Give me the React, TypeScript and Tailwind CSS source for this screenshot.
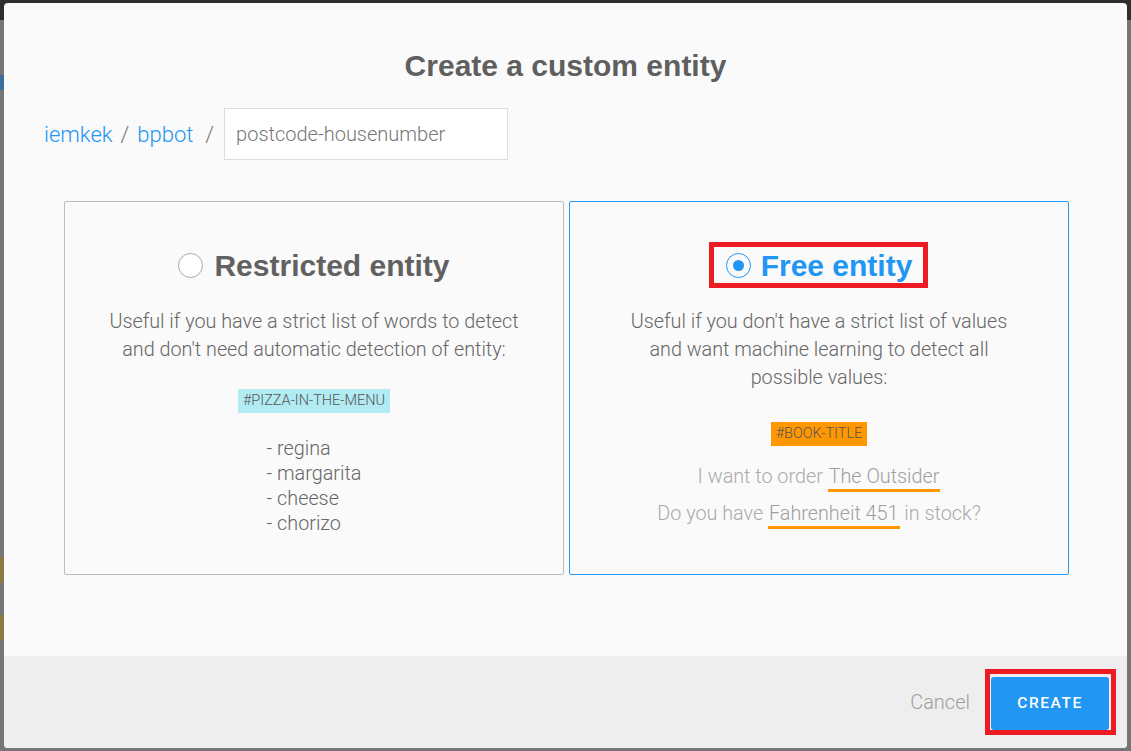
import React from "react"

const body = { fontFamily: "Roboto, 'Noto Sans', sans-serif" }
const head = { fontFamily: "'Liberation Sans', Arial, sans-serif" }

function Radio({ checked }: { checked?: boolean }) {
  return checked ? (
    <span className="w-[25px] h-[25px] rounded-full border-[1.5px] border-[#2196f3] flex items-center justify-center shrink-0">
      <span className="w-[11px] h-[11px] rounded-full bg-[#2196f3]" />
    </span>
  ) : (
    <span className="w-[25px] h-[25px] rounded-full border-[1.5px] border-[#aaaaaa] bg-white shrink-0" />
  )
}

function Mark({ children }: { children: React.ReactNode }) {
  return <span className="border-b-[3px] border-[#ff9800] pb-[1px] px-[1px] text-[#9e9e9e]">{children}</span>
}

export default function App() {
  return (
    <div className="relative w-full h-[751px] bg-[#767676] overflow-hidden" style={body}>
      {/* page behind the overlay */}
      <div className="absolute top-0 left-0 right-0 h-[20px] bg-[#2e2e2e]" />
      <div className="absolute left-0 top-[75px] w-[4px] h-[15px] bg-[#3d6f9a]" />
      <div className="absolute left-0 top-[557px] w-[4px] h-[26px] bg-[#8c7a45]" />
      <div className="absolute left-0 top-[615px] w-[4px] h-[25px] bg-[#8c7a45]" />

      <div className="relative ml-[4px] mt-[3px] w-[1123px] h-[745px] bg-[#fafafa] rounded-[4px] flex flex-col overflow-hidden">
        <h2 className="pt-[47px] text-center text-[30px] leading-[32px] font-bold text-[#5f5f5f]" style={head}>
          Create a custom entity
        </h2>

        <div className="mt-[26px] h-[52px] px-[40px] flex items-center text-[22px] font-light text-[#777]">
          <span className="text-[#2196f3]">iemkek</span>
          <span className="mx-[8px]">/</span>
          <span className="text-[#2196f3]">bpbot</span>
          <span className="ml-[12px] mr-[10px]">/</span>
          <input
            className="w-[284px] h-[52px] bg-white border border-[#dddddd] px-[11px] text-[20px] font-light text-[#777] outline-none placeholder:text-[#777]"
            placeholder="postcode-housenumber"
            style={body}
          />
        </div>

        <div className="mt-[41px] pl-[60px] pr-[58px] grid grid-cols-2 gap-[5px]">
          <div className="h-[374px] border border-[#bdbdbd] rounded-[2px] flex flex-col items-center pt-[43px]">
            <div className="h-[40px] flex items-center gap-[11px] text-[30px] font-bold text-[#616161]" style={head}>
              <Radio />
              <span>Restricted entity</span>
            </div>
            <p className="mt-[23px] text-center text-[19.8px] leading-[28px] font-light text-[#666]">
              Useful if you have a strict list of words to detect
              <br />
              and don't need automatic detection of entity:
            </p>
            <span className="mt-[25px] h-[24px] px-[5px] leading-[24px] text-[14.5px] font-light text-[#555] bg-[#b2ebf2]">
              #PIZZA-IN-THE-MENU
            </span>
            <div className="mt-[23px] text-left text-[19.8px] leading-[25px] font-light text-[#666]">
              <div>- regina</div>
              <div>- margarita</div>
              <div>- cheese</div>
              <div>- chorizo</div>
            </div>
          </div>

          <div className="h-[374px] border border-[#2196f3] rounded-[2px] flex flex-col items-center pt-[43px]">
            <div className="relative h-[40px] flex items-center gap-[10px] text-[30px] font-bold text-[#2196f3]" style={head}>
              <Radio checked />
              <span>Free entity</span>
              <span className="absolute left-[-17px] right-[-16px] top-[-3px] bottom-[-3px] border-[5px] border-[#ed1c24]" />
            </div>
            <p className="mt-[23px] text-center text-[19.8px] leading-[28px] font-light text-[#666]">
              Useful if you don't have a strict list of values
              <br />
              and want machine learning to detect all
              <br />
              possible values:
            </p>
            <span className="mt-[30px] h-[24px] px-[5px] leading-[24px] text-[14.5px] font-light text-[#555] bg-[#ff9800]">
              #BOOK-TITLE
            </span>
            <p className="mt-[17px] text-center text-[19.8px] leading-[28px] font-light text-[#aaaaaa]">
              I want to order <Mark>The Outsider</Mark>
            </p>
            <p className="mt-[9px] text-center text-[19.8px] leading-[28px] font-light text-[#aaaaaa]">
              Do you have <Mark>Fahrenheit 451</Mark> in stock?
            </p>
          </div>
        </div>

        <div className="mt-auto h-[92px] bg-[#eeeeee] flex items-center justify-end pr-[11px]">
          <button className="text-[20px] font-light text-[#9e9e9e] mr-[15px]" style={body}>
            Cancel
          </button>
          <div className="border-[5px] border-[#ed1c24] pt-[3px] pl-[1px] pr-[2px]">
            <button
              className="w-[118px] h-[53px] rounded-[3px] bg-[#2196f3] text-white text-[15.5px] font-medium tracking-[0.1em]"
              style={body}
            >
              CREATE
            </button>
          </div>
        </div>
      </div>
    </div>
  )
}
